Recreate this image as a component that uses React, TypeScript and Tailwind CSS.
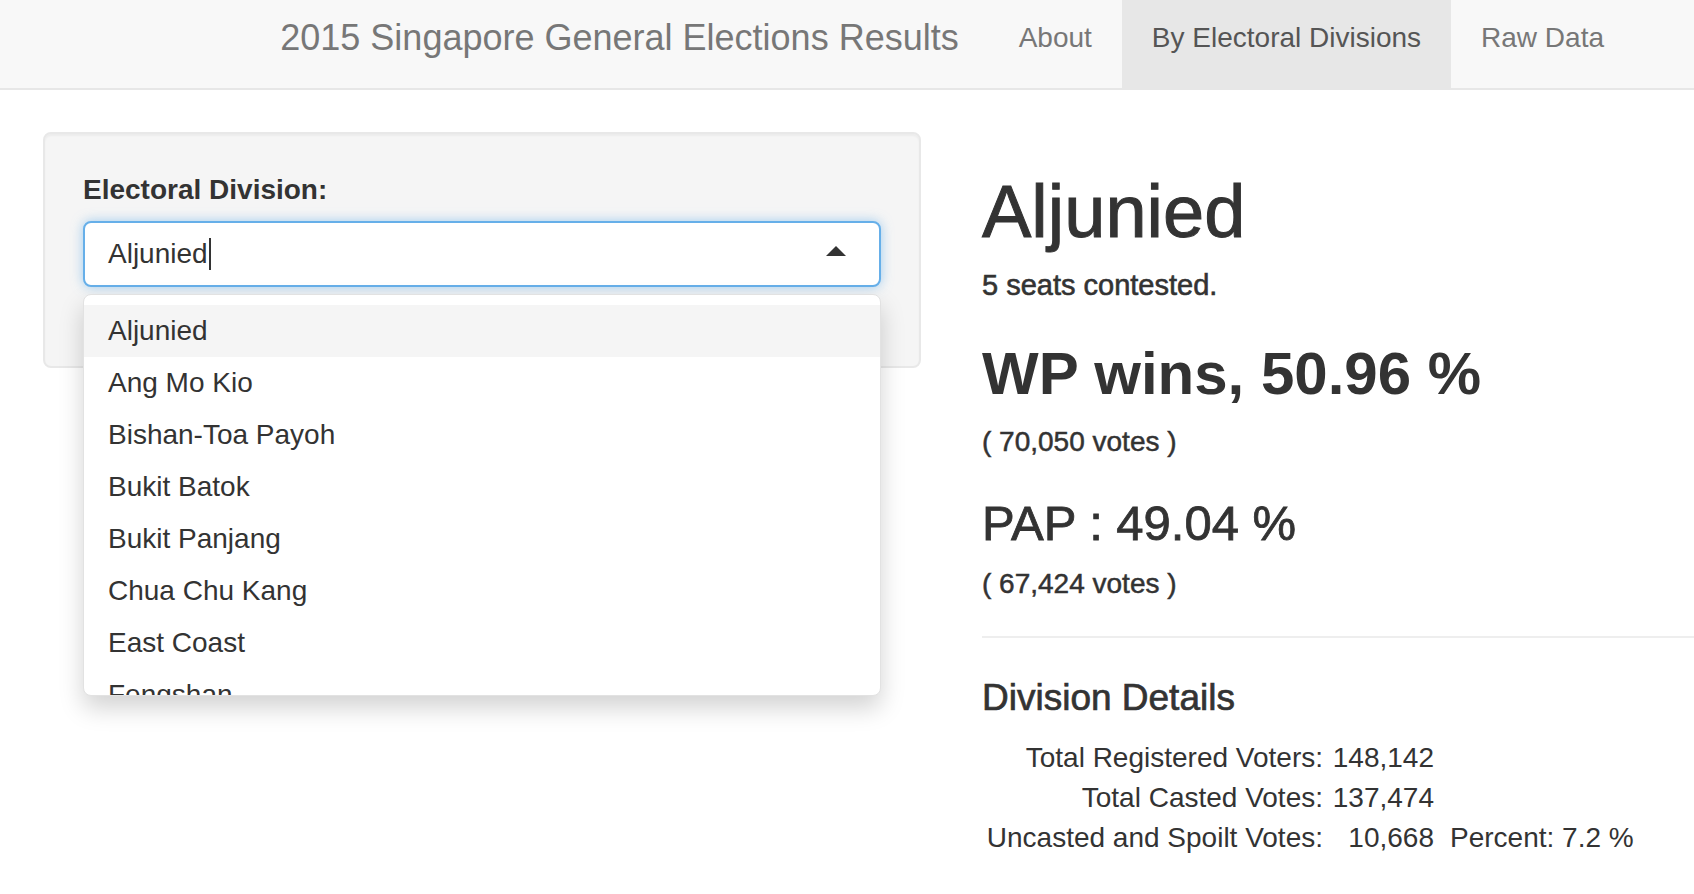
import { useState } from 'react'

const divisions = [
  'Aljunied',
  'Ang Mo Kio',
  'Bishan-Toa Payoh',
  'Bukit Batok',
  'Bukit Panjang',
  'Chua Chu Kang',
  'East Coast',
  'Fengshan',
  'Holland-Bukit Timah',
]

const navLinks = ['About', 'By Electoral Divisions', 'Raw Data']

export default function App() {
  const [active] = useState('By Electoral Divisions')
  const [hovered, setHovered] = useState(0)

  return (
    <div className="min-h-screen bg-white font-['Liberation_Sans',Arial,sans-serif] text-[#333]">
      {/* Navbar */}
      <nav className="h-[90px] bg-[#f8f8f8] border-b-2 border-[#e7e7e7] flex justify-end pr-[60px]">
        <div className="px-[30px] pt-[18px] text-[36px] leading-[40px] text-[#777] whitespace-nowrap">
          2015 Singapore General Elections Results
        </div>
        {navLinks.map((link) => (
          <div
            key={link}
            className={
              link === active
                ? 'h-[88px] px-[30px] pt-[18px] text-[28px] leading-[40px] whitespace-nowrap bg-[#e7e7e7] text-[#555]'
                : 'h-[88px] px-[30px] pt-[18px] text-[28px] leading-[40px] whitespace-nowrap text-[#777]'
            }
          >
            {link}
          </div>
        ))}
      </nav>

      <div className="flex pl-[43px]">
        {/* Sidebar */}
        <div className="w-[878px] shrink-0 pt-[42px]">
          <div className="bg-[#f5f5f5] border-2 border-[#e8e8e8] rounded-[8px] shadow-[inset_0_2px_2px_rgba(0,0,0,0.04)] pt-[36px] px-[38px] pb-[79px]">
            <div className="text-[28px] leading-[40px] font-bold">Electoral Division:</div>
            <div className="relative mt-[11px]">
              <div className="h-[66px] bg-white border-2 border-[#66afe9] rounded-[8px] shadow-[0_0_12px_rgba(102,175,233,0.6)] flex items-center pl-[23px] text-[28px]">
                <span>Aljunied</span>
                <span className="w-[2px] h-[32px] bg-[#333] ml-[1px]" />
                <span className="absolute right-[35px] top-[25px] w-0 h-0 border-x-[10px] border-x-transparent border-b-[10px] border-b-[#333]" />
              </div>

              {/* Dropdown menu */}
              <div className="absolute left-0 right-0 top-[73px] h-[402px] bg-white border border-[#e2e2e2] rounded-[8px] shadow-[0_12px_24px_rgba(0,0,0,0.175)] overflow-hidden pt-[10px] z-10">
                {divisions.map((d, i) => (
                  <div
                    key={d}
                    onMouseEnter={() => setHovered(i)}
                    className={
                      i === hovered
                        ? 'h-[52px] flex items-center pl-[24px] text-[28px] bg-[#f5f5f5]'
                        : 'h-[52px] flex items-center pl-[24px] text-[28px]'
                    }
                  >
                    {d}
                  </div>
                ))}
              </div>
            </div>
          </div>
        </div>

        {/* Main panel */}
        <div className="flex-1 ml-[61px] pt-[82px]">
          <h1 className="text-[74px] leading-[80px] [-webkit-text-stroke:1px_#333]">Aljunied</h1>
          <div className="mt-[13px] text-[29px] leading-[40px] [-webkit-text-stroke:0.6px_#333]">5 seats contested.</div>
          <h2 className="mt-[35px] text-[60px] leading-[68px] font-bold">WP wins, 50.96 %</h2>
          <div className="mt-[14px] text-[28px] leading-[40px] [-webkit-text-stroke:0.5px_#333]">( 70,050 votes )</div>
          <h3 className="mt-[33px] text-[49px] leading-[56px] [-webkit-text-stroke:0.8px_#333]">PAP : 49.04 %</h3>
          <div className="mt-[13px] text-[28px] leading-[40px] [-webkit-text-stroke:0.5px_#333]">( 67,424 votes )</div>
          <div className="mt-[32px] h-[2px] bg-[#eee]" />
          <h4 className="mt-[38px] text-[37px] leading-[44px] [-webkit-text-stroke:0.7px_#333]">Division Details</h4>
          <div className="mt-[18px] grid grid-cols-[341px_111px_auto] text-[28px] leading-[40px] whitespace-nowrap">
            <div className="text-right">Total Registered Voters:</div>
            <div className="text-right">148,142</div>
            <div />
            <div className="text-right">Total Casted Votes:</div>
            <div className="text-right">137,474</div>
            <div />
            <div className="text-right">Uncasted and Spoilt Votes:</div>
            <div className="text-right">10,668</div>
            <div className="pl-[16px]">Percent: 7.2 %</div>
          </div>
        </div>
      </div>
    </div>
  )
}
